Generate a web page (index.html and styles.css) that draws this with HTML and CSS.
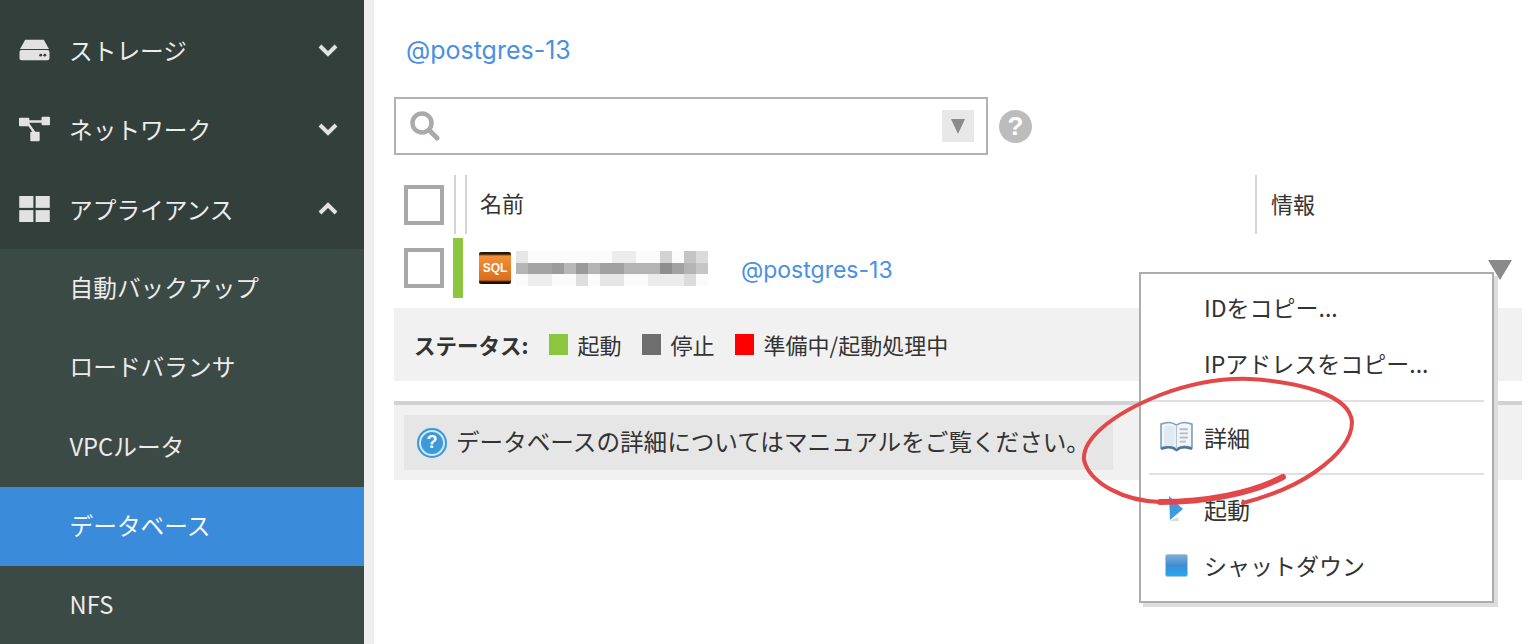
FILE: index.html
```html
<!DOCTYPE html>
<html lang="ja">
<head>
<meta charset="utf-8">
<title>データベース</title>
<link rel="stylesheet" href="styles.css">
</head>
<body>
<div class="page">
  <nav class="sidebar">
    <div class="nav-group">
      <div class="nav-item">
        <svg class="nav-icon" viewBox="0 0 30 22"><path d="M6 1h18l5 9H1z" fill="#e2e2e2"/><rect x="0.5" y="11" width="29" height="10" rx="2" fill="#e2e2e2"/><circle cx="21" cy="16" r="1.4" fill="#333f3b"/><circle cx="25" cy="16" r="1.4" fill="#333f3b"/></svg>
        <span class="nav-label">ストレージ</span>
        <svg class="chevron" viewBox="0 0 20 14"><path d="M2 3l8 8 8-8" fill="none" stroke="#e2e2e2" stroke-width="4"/></svg>
      </div>
      <div class="nav-item">
        <svg class="nav-icon" viewBox="0 0 33 26"><path d="M8 5h18M8 5l10 14" stroke="#e2e2e2" stroke-width="2.5" fill="none"/><rect x="0" y="1" width="11" height="9" rx="1" fill="#e2e2e2"/><rect x="24" y="0" width="9" height="9" rx="1" fill="#e2e2e2"/><rect x="12" y="16" width="10" height="10" rx="1" fill="#e2e2e2"/></svg>
        <span class="nav-label">ネットワーク</span>
        <svg class="chevron" viewBox="0 0 20 14"><path d="M2 3l8 8 8-8" fill="none" stroke="#e2e2e2" stroke-width="4"/></svg>
      </div>
      <div class="nav-item">
        <svg class="nav-icon" viewBox="0 0 27 23"><rect x="0" y="0" width="12.5" height="10.5" fill="#e2e2e2"/><rect x="14.5" y="0" width="12.5" height="10.5" fill="#e2e2e2"/><rect x="0" y="12.5" width="12.5" height="10.5" fill="#e2e2e2"/><rect x="14.5" y="12.5" width="12.5" height="10.5" fill="#e2e2e2"/></svg>
        <span class="nav-label">アプライアンス</span>
        <svg class="chevron" viewBox="0 0 20 14"><path d="M2 11l8-8 8 8" fill="none" stroke="#e2e2e2" stroke-width="4"/></svg>
      </div>
    </div>
    <div class="nav-sub">
      <div class="sub-item">自動バックアップ</div>
      <div class="sub-item">ロードバランサ</div>
      <div class="sub-item">VPCルータ</div>
      <div class="sub-item active">データベース</div>
      <div class="sub-item">NFS</div>
    </div>
  </nav>

  <main class="main">
    <a class="tag-link">@postgres-13</a>

    <div class="search-line">
      <div class="search">
        <svg class="search-icon" viewBox="0 0 30 30"><circle cx="12" cy="12" r="9.5" fill="none" stroke="#aaa" stroke-width="4.5"/><path d="M19 19l8 8" stroke="#aaa" stroke-width="5" stroke-linecap="round"/></svg>
        <span class="search-drop"><span class="drop-tri"></span></span>
      </div>
      <span class="help">?</span>
    </div>

    <div class="thead">
      <span class="check-cell"><span class="check"></span></span>
      <span class="col-gutter"></span>
      <span class="col-name">名前</span>
      <span class="col-info">情報</span>
    </div>

    <div class="trow">
      <span class="check-cell"><span class="check"></span></span>
      <span class="status-bar"></span>
      <span class="sql-icon">SQL</span>
      <svg class="mosaic" viewBox="0 0 16 3" preserveAspectRatio="none" shape-rendering="crispEdges">
        <rect x="0" y="0" width="16" height="3" fill="#fbfbfb"/>
        <rect x="0" y="0" width="1" height="1" fill="#e6e6e6"/><rect x="8" y="0" width="2" height="1" fill="#ececec"/><rect x="12" y="0" width="1" height="1" fill="#d2d2d2"/><rect x="14" y="0" width="1" height="1" fill="#c4c4c4"/><rect x="15" y="0" width="1" height="1" fill="#dadada"/>
        <rect x="0" y="1" width="16" height="1" fill="#b4b4b4"/>
        <rect x="1" y="1" width="2" height="1" fill="#a4a4a4"/><rect x="3" y="1" width="1" height="1" fill="#9c9c9c"/><rect x="4" y="1" width="1" height="1" fill="#b8b8b8"/><rect x="5" y="1" width="1" height="1" fill="#9a9a9a"/><rect x="7" y="1" width="2" height="1" fill="#a0a0a0"/><rect x="12" y="1" width="1" height="1" fill="#8e8e8e"/><rect x="13" y="1" width="1" height="1" fill="#a2a2a2"/><rect x="15" y="1" width="1" height="1" fill="#c6c6c6"/>
        <rect x="1" y="2" width="2" height="1" fill="#ededed"/><rect x="5" y="2" width="1" height="1" fill="#dedede"/><rect x="7" y="2" width="2" height="1" fill="#e6e6e6"/><rect x="11" y="2" width="3" height="1" fill="#ececec"/><rect x="14" y="2" width="1" height="1" fill="#dcdcdc"/>
      </svg>
      <a class="row-tag">@postgres-13</a>
      <span class="row-menu-tri"></span>
    </div>

    <div class="legend">
      <strong class="legend-title">ステータス:</strong>
      <span class="swatch swatch-green"></span><span class="legend-text">起動</span>
      <span class="swatch swatch-gray"></span><span class="legend-text">停止</span>
      <span class="swatch swatch-red"></span><span class="legend-text">準備中/起動処理中</span>
    </div>

    <div class="info-band">
      <div class="notice">
        <span class="notice-icon">?</span>
        <span class="notice-text">データベースの詳細についてはマニュアルをご覧ください。</span>
      </div>
    </div>

    <div class="menu">
      <div class="menu-item menu-item-plain"><span class="menu-ic"></span>IDをコピー...</div>
      <div class="menu-item menu-item-plain"><span class="menu-ic"></span>IPアドレスをコピー...</div>
      <div class="menu-sep"></div>
      <div class="menu-item menu-item-detail">
        <span class="menu-ic"><svg class="ic-book" viewBox="0 0 32 30"><path d="M1 3c5-2 11-2 15 1 4-3 10-3 15-1v23c-5-2-11-2-15 1-4-3-10-3-15-1z" fill="#f3f6f8" stroke="#7f9fbd" stroke-width="1.6"/><path d="M4 5c3-1 6-1 10 0v20c-4-1-7-1-10 0z" fill="#dfeaf2"/><path d="M1 27c5-2 11-2 15 1 4-3 10-3 15-1" fill="none" stroke="#4d7396" stroke-width="2.4"/><path d="M16 4v23" stroke="#b7c6d2" stroke-width="1.2"/><path d="M19 8h8M19 12h8M19 16h8M19 20h6" stroke="#b3bcc4" stroke-width="1.8"/></svg></span>
        詳細
      </div>
      <div class="menu-sep menu-sep-lower"></div>
      <div class="menu-item">
        <span class="menu-ic"><svg class="ic-play" viewBox="0 0 16 26"><path d="M1 0l14 13L2 24z" fill="#3f9ae4"/><path d="M1 25l9-4 1 4z" fill="#d8dde0"/></svg></span>
        起動
      </div>
      <div class="menu-item">
        <span class="menu-ic"><svg class="ic-stop" viewBox="0 0 23 23"><defs><linearGradient id="stopfill" x1="0" y1="0" x2="0" y2="1"><stop offset="0" stop-color="#7eb0d6"/><stop offset="0.5" stop-color="#3f8ed2"/><stop offset="1" stop-color="#22aaf6"/></linearGradient></defs><rect x="0.5" y="0.5" width="22" height="22" rx="2" fill="url(#stopfill)" stroke="#a9c7de"/></svg></span>
        シャットダウン
      </div>
    </div>

    <svg class="scribble" viewBox="1070 370 300 150">
      <path d="M1283 477C1250 494 1205 502 1160 502C1125 501 1090 484 1084 460C1082 440 1110 415 1160 395C1195 382 1225 378 1250 379C1300 382 1350 395 1352 422C1352 440 1335 458 1315 472C1295 486 1270 496 1243 503" fill="none" stroke="#e2474a" stroke-width="4" stroke-linecap="round"/>
      <path d="M1283 477C1250 494 1205 502 1160 502" fill="none" stroke="#e2474a" stroke-width="6" stroke-linecap="round"/>
    </svg>
  </main>
</div>
</body>
</html>
```

FILE: styles.css
```css
* { box-sizing: border-box; }
html, body { margin: 0; padding: 0; background: #fff; }
body {
  font-family: "Noto Sans CJK JP", "Noto Sans", sans-serif;
  color: #333;
  overflow: hidden;
}
.page { display: flex; width: 1536px; height: 644px; overflow: hidden; }

.sidebar {
  flex: 0 0 374px;
  height: 644px;
  background: #333f3b;
  border-right: 10px solid #eeeeee;
  color: #ececec;
  font-size: 23.7px;
}
.nav-group { padding-top: 10px; height: 249px; }
.nav-item { display: flex; align-items: center; height: 79.5px; padding: 0 26px 0 19px; }
.nav-icon { width: 31px; height: 26px; margin-right: 19px; flex: none; }
.nav-label { flex: 1; }
.chevron { width: 20px; height: 14px; flex: none; }
.nav-sub { background: #3c4a45; height: 395px; }
.sub-item { display: flex; align-items: center; height: 79.3px; padding: 0 0 3px 69.5px; }
.sub-item.active { background: #3a8cda; color: #f4f8fc; }

.main { position: relative; flex: 1; padding: 0 14px 0 20px; min-width: 0; }
.tag-link {
  display: block;
  margin: 33px 0 0 12px;
  height: 34px;
  line-height: 34px;
  font-family: "Inter", "Noto Sans", sans-serif;
  font-size: 25px;
  color: #4a90e2;
}
.search-line { display: flex; align-items: center; margin-top: 30px; }
.search {
  display: flex;
  align-items: center;
  justify-content: space-between;
  width: 594px;
  height: 58px;
  border: 2px solid #b2b2b2;
  padding: 0 12px 0 14px;
}
.search-icon { width: 30px; height: 30px; }
.search-drop {
  display: flex;
  align-items: center;
  justify-content: center;
  width: 32px;
  height: 32px;
  background: #e8e8e8;
}
.drop-tri { border-style: solid; border-width: 15px 7px 0; border-color: #8b8b8b transparent transparent; }
.help {
  display: flex;
  align-items: center;
  justify-content: center;
  width: 33px;
  height: 33px;
  margin: 0 0 0 11px;
  border-radius: 50%;
  background: #bcbcbc;
  color: #fff;
  font-weight: 700;
  font-size: 26px;
  font-family: "Liberation Sans", sans-serif;
}

.thead { display: flex; align-items: center; height: 59px; margin-top: 20px; font-size: 22px; }
.check-cell { display: flex; align-items: center; flex: none; width: 60px; padding-left: 10px; }
.check { display: block; width: 40px; height: 40px; border: 4px solid #a8a8a8; background: #fff; }
.col-gutter { flex: none; width: 13px; height: 59px; border-left: 2px solid #d4d4d4; border-right: 2px solid #d4d4d4; }
.col-name { flex: none; width: 790px; height: 59px; line-height: 55px; padding-left: 13px; border-right: 2px solid #d4d4d4; }
.col-info { padding: 0 0 4px 14px; }

.trow { display: flex; align-items: center; height: 60px; margin-top: 4px; }
.status-bar { flex: none; width: 10px; height: 60px; margin-left: -1px; background: #8cc63e; }
.sql-icon {
  flex: none;
  width: 32px;
  height: 32px;
  margin: 0 5px 0 16px;
  border-radius: 2px;
  background: linear-gradient(#2a1608 0 2px, #f0913a 4px, #dd6d1c 28px, #1d0f05 30px);
  color: #fff;
  font-family: "Liberation Sans", sans-serif;
  font-weight: 700;
  font-size: 12px;
  line-height: 33px;
  text-align: center;
}
.mosaic { flex: none; width: 192px; height: 35px; }
.row-tag {
  margin-left: 33px;
  padding-top: 4px;
  font-family: "Inter", "Noto Sans", sans-serif;
  font-size: 23px;
  color: #4a90e2;
}
.row-menu-tri {
  margin: 4px 10px 0 auto;
  border-style: solid;
  border-width: 20px 12px 0;
  border-color: #8a8a8a transparent transparent;
  position: relative;
  z-index: 2;
}

.legend {
  display: flex;
  align-items: center;
  height: 73px;
  margin-top: 10px;
  padding: 0 0 1px 20px;
  background: #f1f1f1;
  font-size: 22px;
}
.legend-title { font-weight: 700; margin-right: 20px; font-size: 21.5px; }
.swatch { flex: none; width: 19px; height: 21px; margin-right: 10px; }
.swatch-green { background: #8cc63e; }
.swatch-gray { background: #6e6e6e; }
.swatch-red { background: #ff0000; }
.legend-text { margin-right: 20px; }

.info-band {
  height: 79px;
  margin-top: 20px;
  border-top: 4px solid #d2d2d2;
  padding: 10px 0 0 10px;
  background: #f1f1f1;
}
.notice { display: flex; align-items: center; width: 709px; height: 55px; padding-left: 13px; background: #e6e6e6; font-size: 23.6px; }
.notice-text { padding-bottom: 3px; }
.notice-icon {
  flex: none;
  display: flex;
  align-items: center;
  justify-content: center;
  width: 30px;
  height: 30px;
  margin-right: 9px;
  border-radius: 50%;
  background: #3d9ad6;
  box-shadow: inset 0 0 0 2px #3d9ad6, inset 0 0 0 4px #cfe8f5;
  color: #fff;
  font-family: "Liberation Sans", sans-serif;
  font-weight: 700;
  font-size: 18px;
}

.menu {
  position: absolute;
  left: 765px;
  top: 272px;
  width: 355px;
  height: 331px;
  padding-top: 7px;
  border: 2px solid #adadad;
  background: #fff;
  box-shadow: 4px 4px 0 #dddddd;
  font-size: 23px;
  z-index: 1;
}
.menu-item { display: flex; align-items: center; height: 56px; }
.menu-item-plain { padding-bottom: 4px; }
.menu-item-detail { height: 57px; padding-bottom: 2px; }
.menu-ic { display: flex; align-items: center; justify-content: center; flex: none; width: 63px; padding-left: 7px; }
.menu-sep { height: 2px; margin: 7px 8px; background: #e0e0e0; }
.menu-sep-lower { margin-bottom: 6px; }
.ic-book { width: 33px; height: 31px; }
.ic-play { width: 16px; height: 26px; }
.ic-stop { width: 23px; height: 23px; }

.scribble { position: absolute; left: 696px; top: 370px; width: 300px; height: 150px; z-index: 3; pointer-events: none; }
```
